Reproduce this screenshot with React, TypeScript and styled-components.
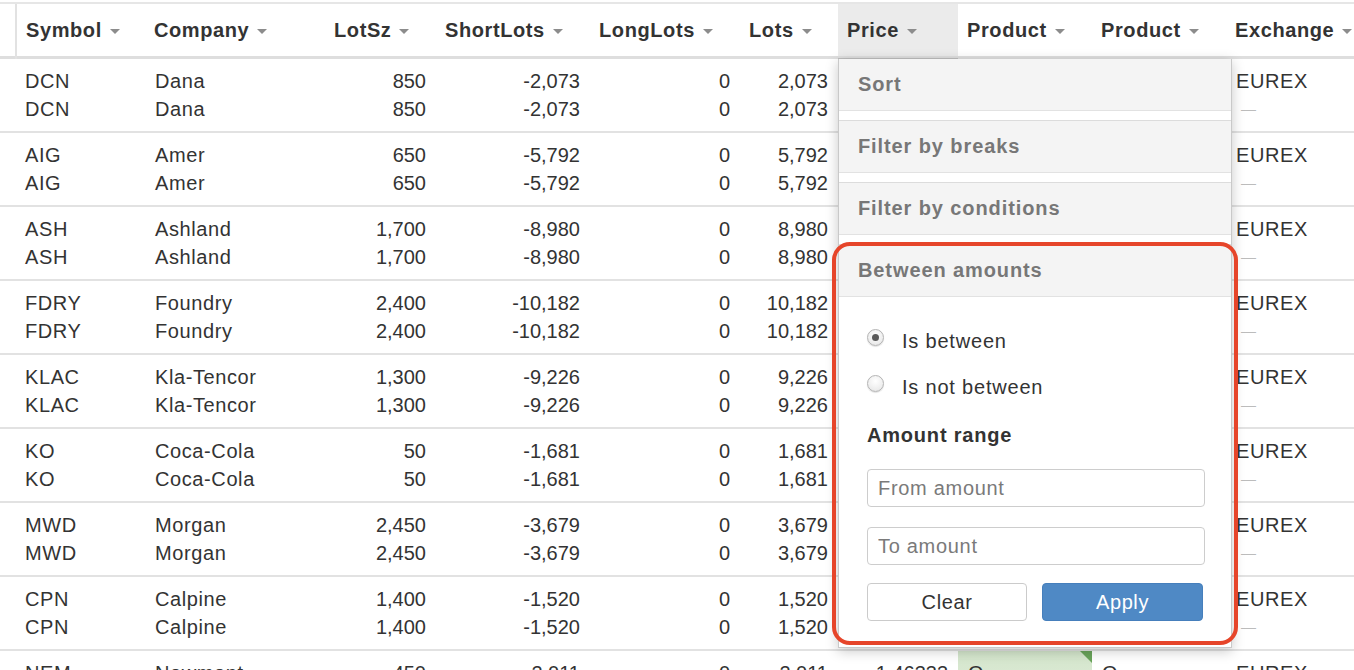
import React from "react";
import styled, { createGlobalStyle } from "styled-components";

const GlobalStyle = createGlobalStyle`
  html, body { margin: 0; padding: 0; background: #fff; }
  body {
    font-family: "Liberation Sans", Arial, Helvetica, sans-serif;
    font-size: 20px;
    color: #333;
    overflow: hidden;
  }
`;

const COLS = "17px 128px 180px 111px 154px 150px 98px 120px 134px 134px 170px";

const Page = styled.div`
  width: 1354px;
  height: 670px;
  overflow: hidden;
  padding-top: 2px;
  box-sizing: border-box;
`;

const Table = styled.div`
  width: 1400px;
`;

const HeaderRow = styled.div`
  display: grid;
  grid-template-columns: ${COLS};
  height: 52px;
  border-top: 2px solid #e6e6e6;
  border-bottom: 3px solid #dedede;
  position: relative;
  z-index: 2;
`;

const HeadStub = styled.div`
  border-right: 2px solid #e2e2e2;
  margin-bottom: -3px;
`;

const HeadCell = styled.div<{ $active?: boolean }>`
  position: relative;
  display: flex;
  align-items: center;
  gap: 8px;
  padding: 0 9px;
  font-weight: bold;
  letter-spacing: 0.6px;
  color: #333;
  white-space: nowrap;
  background: ${(p) => (p.$active ? "#ebebeb" : "transparent")};
  &::after {
    content: "";
    display: ${(p) => (p.$active ? "block" : "none")};
    position: absolute;
    left: 0;
    right: 0;
    bottom: -3px;
    height: 1.5px;
    background: #bdbdbd;
  }
`;

const Caret = styled.span`
  display: inline-block;
  width: 0;
  height: 0;
  border-left: 5.5px solid transparent;
  border-right: 5.5px solid transparent;
  border-top: 5px solid #8c8c8c;
  margin-top: 2px;
`;

const Group = styled.div`
  display: grid;
  grid-template-columns: ${COLS};
  border-bottom: 2px solid #e2e2e2;
`;

const Cell = styled.div<{ $align?: "left" | "right"; $flag?: boolean }>`
  position: relative;
  padding: 8px 10px 8px 10px;
  text-align: ${(p) => p.$align ?? "left"};
  letter-spacing: ${(p) => (p.$align === "right" ? "0" : "0.6px")};
  white-space: nowrap;
  overflow: hidden;
  background: ${(p) =>
    p.$flag ? "linear-gradient(180deg, #d3e5cb 0%, #e6f0e1 100%)" : "transparent"};
  &::after {
    content: "";
    display: ${(p) => (p.$flag ? "block" : "none")};
    position: absolute;
    top: 0;
    right: 0;
    width: 0;
    height: 0;
    border-top: 12px solid #69a45a;
    border-left: 12px solid transparent;
  }
`;

const SymbolCell = styled(Cell)`
  padding-left: 8px;
`;

const Line = styled.div`
  line-height: 28px;
  height: 28px;
`;

const Dash = styled.div`
  line-height: 28px;
  height: 28px;
  font-size: 15px;
  color: #bcbcbc;
  padding-left: 5px;
`;

const PriceAnchor = styled.div`
  position: relative;
`;

const Popup = styled.div`
  position: absolute;
  top: 55px;
  left: 0;
  width: 394px;
  box-sizing: border-box;
  background: #fff;
  border: 1px solid #c9c9c9;
  border-top: none;
  box-shadow: 0 3px 12px rgba(0, 0, 0, 0.22);
  z-index: 5;
  font-weight: normal;
  letter-spacing: 0.6px;
`;

const Section = styled.div<{ $first?: boolean }>`
  position: relative;
  border-top: ${(p) => (p.$first ? "none" : "1px solid #dcdcdc")};
`;

const SectionHead = styled.div`
  height: 51px;
  display: flex;
  align-items: center;
  padding-left: 19px;
  background: #f4f4f4;
  border-bottom: 1px solid #e2e2e2;
  color: #777;
  font-weight: bold;
  letter-spacing: 0.9px;
`;

const SectionGap = styled.div`
  height: 9px;
`;

const Highlight = styled.div`
  position: absolute;
  top: -3px;
  left: -7px;
  right: -7px;
  bottom: 2px;
  border: 4px solid #e6452a;
  border-radius: 18px;
  pointer-events: none;
`;

const FilterBody = styled.div`
  padding: 30px 26px 26px 28px;
  display: flex;
  flex-direction: column;
`;

const RadioRow = styled.label`
  display: flex;
  align-items: center;
  height: 28px;
  gap: 18px;
  color: #333;
  letter-spacing: 0.8px;
  & + & {
    margin-top: 18px;
  }
`;

const RadioDot = styled.span<{ $checked?: boolean }>`
  width: 17px;
  height: 17px;
  border-radius: 50%;
  box-sizing: border-box;
  border: 1px solid #b4b4b4;
  background: radial-gradient(circle at 50% 35%, #ffffff 0%, #ececec 70%, #dcdcdc 100%);
  box-shadow: 0 1px 1px rgba(0, 0, 0, 0.12);
  display: flex;
  align-items: center;
  justify-content: center;
  margin-top: -7px;
  &::after {
    content: "";
    display: ${(p) => (p.$checked ? "block" : "none")};
    width: 7px;
    height: 7px;
    border-radius: 50%;
    background: #5a5a5a;
  }
`;

const FieldLabel = styled.div`
  margin-top: 20px;
  line-height: 28px;
  font-weight: bold;
  letter-spacing: 0.8px;
  color: #333;
`;

const Input = styled.input`
  margin-top: 20px;
  height: 38px;
  box-sizing: border-box;
  width: 100%;
  border: 1.5px solid #cdcdcd;
  border-radius: 4px;
  padding: 0 10px;
  font-family: "Liberation Sans", Arial, Helvetica, sans-serif;
  font-size: 20px;
  letter-spacing: 0.7px;
  color: #333;
  outline: none;
  &::placeholder {
    color: #7a7a7a;
  }
`;

const Buttons = styled.div`
  margin-top: 18px;
  display: grid;
  grid-template-columns: 160px 161px;
  gap: 15px;
`;

const Button = styled.button<{ $primary?: boolean }>`
  height: 38px;
  border-radius: 4px;
  font-family: "Liberation Sans", Arial, Helvetica, sans-serif;
  font-size: 20px;
  letter-spacing: 0.6px;
  cursor: pointer;
  border: 1.5px solid ${(p) => (p.$primary ? "#467fbc" : "#cbcbcb")};
  background: ${(p) => (p.$primary ? "#4f89c5" : "#fff")};
  color: ${(p) => (p.$primary ? "#fff" : "#333")};
`;

type Row = {
  sym: string;
  co: string;
  lot: string;
  short: string;
  long: string;
  lots: string;
  price: string;
  prod: string;
  flag?: boolean;
};

const rows: Row[] = [
  { sym: "DCN", co: "Dana", lot: "850", short: "-2,073", long: "0", lots: "2,073", price: "1.46333", prod: "Q" },
  { sym: "AIG", co: "Amer", lot: "650", short: "-5,792", long: "0", lots: "5,792", price: "1.46333", prod: "Q" },
  { sym: "ASH", co: "Ashland", lot: "1,700", short: "-8,980", long: "0", lots: "8,980", price: "1.46333", prod: "Q" },
  { sym: "FDRY", co: "Foundry", lot: "2,400", short: "-10,182", long: "0", lots: "10,182", price: "1.46333", prod: "Q" },
  { sym: "KLAC", co: "Kla-Tencor", lot: "1,300", short: "-9,226", long: "0", lots: "9,226", price: "1.46333", prod: "Q" },
  { sym: "KO", co: "Coca-Cola", lot: "50", short: "-1,681", long: "0", lots: "1,681", price: "1.46333", prod: "Q" },
  { sym: "MWD", co: "Morgan", lot: "2,450", short: "-3,679", long: "0", lots: "3,679", price: "1.46333", prod: "Q" },
  { sym: "CPN", co: "Calpine", lot: "1,400", short: "-1,520", long: "0", lots: "1,520", price: "1.46333", prod: "Q" },
  { sym: "NEM", co: "Newmont", lot: "450", short: "-2,011", long: "0", lots: "2,011", price: "1.46333", prod: "Q", flag: true },
];

const headers = ["Symbol", "Company", "LotSz", "ShortLots", "LongLots", "Lots"];

const Twice: React.FC<{ v: string }> = ({ v }) => (
  <>
    <Line>{v}</Line>
    <Line>{v}</Line>
  </>
);

export default function App() {
  return (
    <>
      <GlobalStyle />
      <Page>
        <Table>
          <HeaderRow>
            <HeadStub />
            {headers.map((h) => (
              <HeadCell key={h}>
                {h}
                <Caret />
              </HeadCell>
            ))}
            <PriceAnchor>
              <HeadCell $active style={{ height: "100%" }}>
                Price
                <Caret />
              </HeadCell>
              <Popup>
                <Section $first>
                  <SectionHead>Sort</SectionHead>
                  <SectionGap />
                </Section>
                <Section>
                  <SectionHead>Filter by breaks</SectionHead>
                  <SectionGap />
                </Section>
                <Section>
                  <SectionHead>Filter by conditions</SectionHead>
                  <SectionGap />
                </Section>
                <Section>
                  <SectionHead>Between amounts</SectionHead>
                  <FilterBody>
                    <RadioRow>
                      <RadioDot $checked />
                      Is between
                    </RadioRow>
                    <RadioRow>
                      <RadioDot />
                      Is not between
                    </RadioRow>
                    <FieldLabel>Amount range</FieldLabel>
                    <Input placeholder="From amount" />
                    <Input placeholder="To amount" />
                    <Buttons>
                      <Button>Clear</Button>
                      <Button $primary>Apply</Button>
                    </Buttons>
                  </FilterBody>
                  <Highlight />
                </Section>
              </Popup>
            </PriceAnchor>
            <HeadCell>
              Product
              <Caret />
            </HeadCell>
            <HeadCell>
              Product
              <Caret />
            </HeadCell>
            <HeadCell>
              Exchange
              <Caret />
            </HeadCell>
          </HeaderRow>
          {rows.map((r) => (
            <Group key={r.sym}>
              <Cell />
              <SymbolCell><Twice v={r.sym} /></SymbolCell>
              <Cell><Twice v={r.co} /></Cell>
              <Cell $align="right"><Twice v={r.lot} /></Cell>
              <Cell $align="right"><Twice v={r.short} /></Cell>
              <Cell $align="right"><Twice v={r.long} /></Cell>
              <Cell $align="right"><Twice v={r.lots} /></Cell>
              <Cell $align="right"><Twice v={r.price} /></Cell>
              <Cell $flag={r.flag}><Twice v={r.prod} /></Cell>
              <Cell><Twice v={r.prod} /></Cell>
              <Cell>
                <Line>EUREX</Line>
                <Dash>—</Dash>
              </Cell>
            </Group>
          ))}
        </Table>
      </Page>
    </>
  );
}
